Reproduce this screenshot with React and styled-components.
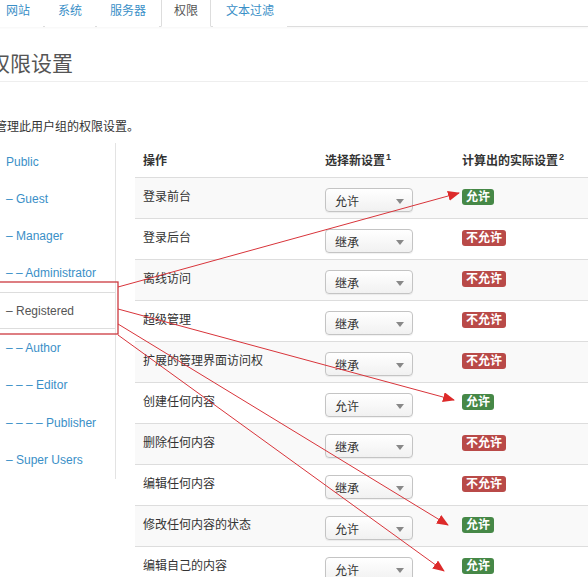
import React from 'react';
import styled, {createGlobalStyle} from 'styled-components';

const GlobalStyle = createGlobalStyle`
  html, body {
    margin: 0;
    padding: 0;
    background: #fff;
  }
  body {
    font-family: "Liberation Sans", "Noto Sans CJK SC", sans-serif;
    font-size: 12px;
    color: #333;
  }
`;

const Page = styled.div`
  position: relative;
  width: 588px;
  height: 577px;
  overflow: hidden;
  background: #fff;
`;

const TabBar = styled.ul`
  display: flex;
  list-style: none;
  margin: -6px 0 0 -7px;
  padding: 0;
  border-bottom: 1px solid #ddd;
  box-shadow: 0 1px 2px rgba(0, 0, 0, 0.04);
`;

const Tab = styled.li`
  padding: 7px 12px 6px;
  line-height: 18px;
  margin-right: 2px;
  margin-bottom: -1px;
  border: 1px solid ${props => (props.$active ? '#ddd' : 'transparent')};
  border-bottom-color: transparent;
  background: #fff;
  color: ${props => (props.$active ? '#555' : '#3a8fc7')};
`;

const Title = styled.h2`
  margin: 24px 0 0 -11px;
  padding-bottom: 5px;
  font-size: 21px;
  line-height: 25px;
  font-weight: normal;
  color: #555;
  border-bottom: 1px solid #eee;
`;

const Desc = styled.p`
  margin: 36px 0 0 -5px;
  line-height: 18px;
  color: #333;
`;

const Main = styled.div`
  display: flex;
  align-items: flex-start;
  margin-top: 7px;
  gap: 19px;
`;

const Nav = styled.ul`
  list-style: none;
  margin: 0;
  padding: 0;
  width: 115px;
  flex: none;
  border-right: 1px solid #e3e3e3;
`;

const NavItem = styled.li`
  padding: 8.65px 0 8.65px 6px;
  line-height: 18px;
  border-top: 1px solid ${props => (props.$active ? '#ddd' : 'transparent')};
  border-bottom: 1px solid ${props => (props.$active ? '#ddd' : 'transparent')};
  color: ${props => (props.$active ? '#555' : '#3a8fc7')};
  white-space: nowrap;
`;

const Table = styled.table`
  flex: 1;
  border-collapse: collapse;
  margin-right: -40px;
`;

const Th = styled.th`
  text-align: left;
  font-weight: bold;
  padding: 9px 8px 7px;
  line-height: 18px;
  color: #333;
  width: ${props => props.$w || 'auto'};
  white-space: nowrap;
  sup {
    font-size: 9px;
    line-height: 0;
    margin-left: 1px;
  }
`;

const Row = styled.tr`
  background: ${props => (props.$striped ? '#f9f9f9' : '#fff')};
  border-top: 1px solid #ddd;
`;

const Td = styled.td`
  padding: ${props => (props.$label ? '10px 8px 4px' : '8px 8px 6px')};
  line-height: 18px;
  vertical-align: top;
  color: #333;
  white-space: nowrap;
`;

const SelectBox = styled.div`
  position: relative;
  margin-top: 2px;
  width: 88px;
  height: 24px;
  box-sizing: border-box;
  border: 1px solid #c4c4c4;
  border-radius: 4px;
  background: linear-gradient(#fff, #f1f1f1);
  box-shadow: 0 1px 1px rgba(0, 0, 0, 0.06);
  padding: 4px 0 0 9px;
  line-height: 18px;
  color: #333;
  &::after {
    content: '';
    position: absolute;
    right: 8px;
    top: 10px;
    border-left: 4px solid transparent;
    border-right: 4px solid transparent;
    border-top: 5px solid #888;
  }
`;

const Badge = styled.span`
  display: inline-block;
  margin-top: 3px;
  padding: 1px 4px;
  line-height: 14px;
  font-weight: bold;
  color: #fff;
  border-radius: 3px;
  background: ${props => (props.$ok ? '#468847' : '#b94a48')};
`;

const Overlay = styled.svg`
  position: absolute;
  left: 0;
  top: 0;
  pointer-events: none;
`;

const groups = [
  'Public',
  '– Guest',
  '– Manager',
  '– – Administrator',
  '– Registered',
  '– – Author',
  '– – – Editor',
  '– – – – Publisher',
  '– Super Users'
];

const rules = [
  ['登录前台', '允许', true],
  ['登录后台', '继承', false],
  ['离线访问', '继承', false],
  ['超级管理', '继承', false],
  ['扩展的管理界面访问权', '继承', false],
  ['创建任何内容', '允许', true],
  ['删除任何内容', '继承', false],
  ['编辑任何内容', '继承', false],
  ['修改任何内容的状态', '允许', true],
  ['编辑自己的内容', '允许', true]
];

// annotation arrows from the highlighted group to the resulting badges
const arrows = [
  [118, 287, 459, 193],
  [118, 309, 454, 400],
  [118, 324, 448, 525],
  [118, 335, 444, 571]
];

export default function App() {
  return (
    <Page>
      <GlobalStyle />
      <TabBar>
        <Tab>网站</Tab>
        <Tab>系统</Tab>
        <Tab>服务器</Tab>
        <Tab $active>权限</Tab>
        <Tab>文本过滤</Tab>
      </TabBar>
      <Title>权限设置</Title>
      <Desc>管理此用户组的权限设置。</Desc>
      <Main>
        <Nav>
          {groups.map(g => (
            <NavItem key={g} $active={g === '– Registered'}>
              {g}
            </NavItem>
          ))}
        </Nav>
        <Table>
          <thead>
            <tr>
              <Th $w="166px">操作</Th>
              <Th $w="121px">
                选择新设置<sup>1</sup>
              </Th>
              <Th>
                计算出的实际设置<sup>2</sup>
              </Th>
            </tr>
          </thead>
          <tbody>
            {rules.map(([name, setting, ok], i) => (
              <Row key={name} $striped={i % 2 === 0}>
                <Td $label>{name}</Td>
                <Td>
                  <SelectBox>{setting}</SelectBox>
                </Td>
                <Td>
                  <Badge $ok={ok}>{ok ? '允许' : '不允许'}</Badge>
                </Td>
              </Row>
            ))}
          </tbody>
        </Table>
      </Main>
      <Overlay width="588" height="577" viewBox="0 0 588 577">
        <defs>
          <marker
            id="head"
            markerUnits="userSpaceOnUse"
            markerWidth="12"
            markerHeight="10"
            refX="11"
            refY="5"
            orient="auto"
          >
            <path d="M0,0 L12,5 L0,10 z" fill="#dd2a2a" />
          </marker>
        </defs>
        <rect x="-2" y="282" width="120" height="52" fill="none" stroke="#cc3a3f" strokeWidth="1.3" />
        {arrows.map(([x1, y1, x2, y2], i) => (
          <line
            key={i}
            x1={x1}
            y1={y1}
            x2={x2}
            y2={y2}
            stroke="#d8343a"
            strokeWidth="1"
            markerEnd="url(#head)"
          />
        ))}
      </Overlay>
    </Page>
  );
}
